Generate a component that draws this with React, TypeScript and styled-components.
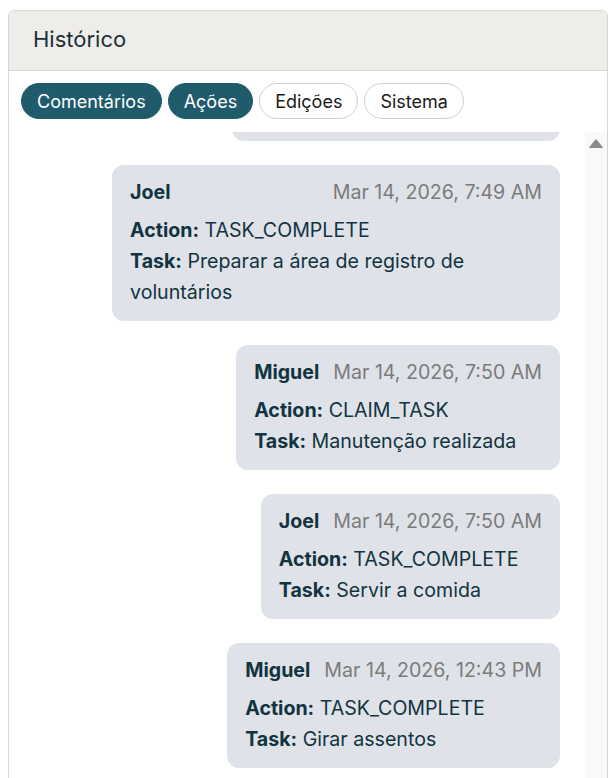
import React, {FC, useLayoutEffect, useRef} from 'react';
import styled, {createGlobalStyle} from 'styled-components';

interface HistoryEntry {
  id: number;
  user: string;
  date: string;
  action: string;
  task: string;
}

const entries: HistoryEntry[] = [
  {id: 1, user: 'Miguel', date: 'Mar 14, 2026, 12:41 PM', action: 'CLAIM_TASK', task: 'Preparar a área de café'},
  {id: 2, user: 'Joel', date: 'Mar 14, 2026, 7:49 AM', action: 'TASK_COMPLETE', task: 'Preparar a área de registro de voluntários'},
  {id: 3, user: 'Miguel', date: 'Mar 14, 2026, 7:50 AM', action: 'CLAIM_TASK', task: 'Manutenção realizada'},
  {id: 4, user: 'Joel', date: 'Mar 14, 2026, 7:50 AM', action: 'TASK_COMPLETE', task: 'Servir a comida'},
  {id: 5, user: 'Miguel', date: 'Mar 14, 2026, 12:43 PM', action: 'TASK_COMPLETE', task: 'Girar assentos'},
  {id: 6, user: 'Joel', date: 'Mar 14, 2026, 12:45 PM', action: 'CLAIM_TASK', task: 'Limpar as mesas'},
];

const tabs = [
  {label: 'Comentários', active: true},
  {label: 'Ações', active: true},
  {label: 'Edições', active: false},
  {label: 'Sistema', active: false},
];

const GlobalStyle = createGlobalStyle`
  html, body {
    margin: 0;
    padding: 0;
    background: #ffffff;
  }
  body {
    padding: 10px 0 0 8px;
    font-family: Inter, "Noto Sans", sans-serif;
    overflow: hidden;
  }
`;

const Panel = styled.section`
  width: 600px;
  box-sizing: border-box;
  border: 1px solid #d6d6d6;
  border-radius: 6px;
  overflow: hidden;
  background: #ffffff;
`;

const PanelHeader = styled.header`
  display: flex;
  align-items: center;
  height: 60px;
  box-sizing: border-box;
  padding: 0 24px 3px;
  background: #eeede9;
  border-bottom: 1px solid #d4d4d4;
  font-size: 22px;
  color: #1c2f38;
`;

const PanelBody = styled.div`
  display: flex;
  flex-direction: column;
  gap: 13px;
  padding: 12px 0 0 12px;
`;

const TabRow = styled.div`
  display: flex;
  gap: 6px;
`;

const Tab = styled.button<{active: boolean}>`
  height: 36px;
  padding: 0 15px;
  border-radius: 18px;
  border: 1px solid ${(props) => (props.active ? '#1f5b6b' : '#cfcfcf')};
  background-color: ${(props) => (props.active ? '#1f5b6b' : '#ffffff')};
  color: ${(props) => (props.active ? '#ffffff' : '#1a1a1a')};
  font-family: inherit;
  font-size: 18px;
  cursor: pointer;
`;

const ScrollArea = styled.div`
  display: flex;
  height: 700px;
`;

const List = styled.div`
  flex: 1;
  display: flex;
  flex-direction: column;
  align-items: flex-end;
  gap: 24px;
  padding-right: 25px;
  overflow-y: auto;
  scrollbar-width: none;

  &::-webkit-scrollbar {
    display: none;
  }
`;

const ScrollTrack = styled.div`
  width: 22px;
  flex-shrink: 0;
  display: flex;
  justify-content: center;
  padding-top: 7px;
  box-sizing: border-box;
  background: #f9f9f9;
`;

const Card = styled.article`
  flex-shrink: 0;
  max-width: 448px;
  box-sizing: border-box;
  padding: 12px 18px 13px;
  border-radius: 12px;
  background: #dfe2e9;
  color: #12343f;
  font-size: 19.6px;
`;

const CardHead = styled.div`
  display: flex;
  justify-content: space-between;
  gap: 14px;
  margin-bottom: 8px;
  line-height: 30px;
`;

const Author = styled.span`
  font-weight: 700;
`;

const Stamp = styled.span`
  color: #7b7b7b;
  white-space: nowrap;
`;

const Line = styled.div`
  line-height: 31px;
`;

const Label = styled.strong`
  font-weight: 700;
`;

const UpArrow: FC = () => (
  <svg width="14" height="9" viewBox="0 0 14 9">
    <path d="M7 0.5 L13.5 8.5 L0.5 8.5 Z" fill="#8a8a8a" strokeLinejoin="round" stroke="#8a8a8a" />
  </svg>
);

const HistoryCard: FC<{entry: HistoryEntry}> = ({entry}) => (
  <Card>
    <CardHead>
      <Author>{entry.user}</Author>
      <Stamp>{entry.date}</Stamp>
    </CardHead>
    <Line>
      <Label>Action:</Label> {entry.action}
    </Line>
    <Line>
      <Label>Task:</Label> {entry.task}
    </Line>
  </Card>
);

const App: FC = () => {
  const listRef = useRef<HTMLDivElement>(null);

  useLayoutEffect(() => {
    const list = listRef.current;
    const first = list?.firstElementChild as HTMLElement | null;
    if (list && first) {
      list.scrollTop = first.offsetHeight - 9;
    }
  }, []);

  return (
    <>
      <GlobalStyle />
      <Panel>
        <PanelHeader>Histórico</PanelHeader>
        <PanelBody>
          <TabRow>
            {tabs.map((tab) => (
              <Tab key={tab.label} active={tab.active}>
                {tab.label}
              </Tab>
            ))}
          </TabRow>
          <ScrollArea>
            <List ref={listRef}>
              {entries.map((entry) => (
                <HistoryCard key={entry.id} entry={entry} />
              ))}
            </List>
            <ScrollTrack>
              <UpArrow />
            </ScrollTrack>
          </ScrollArea>
        </PanelBody>
      </Panel>
    </>
  );
};

export default App;
